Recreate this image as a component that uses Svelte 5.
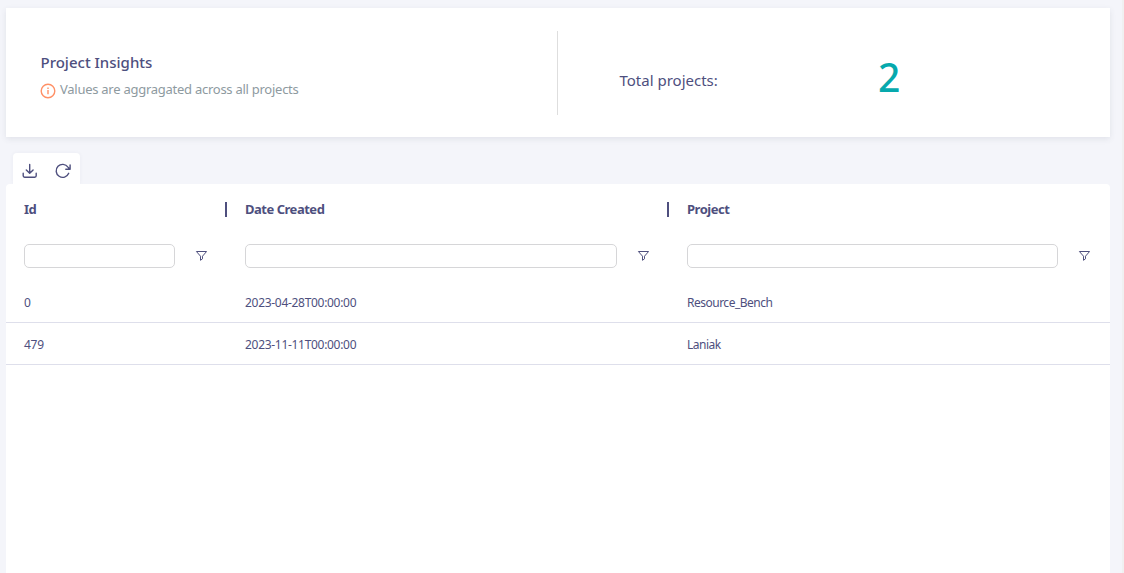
<script>
  const columns = [
    { key: 'id', label: 'Id' },
    { key: 'created', label: 'Date Created' },
    { key: 'project', label: 'Project' }
  ];
  const rows = [
    { id: '0', created: '2023-04-28T00:00:00', project: 'Resource_Bench' },
    { id: '479', created: '2023-11-11T00:00:00', project: 'Laniak' }
  ];
  let filters = $state({ id: '', created: '', project: '' });
</script>

<main>
  <section class="summary">
    <div class="intro">
      <h1>Project Insights</h1>
      <p>
        <svg width="16" height="16" viewBox="0 0 16 16" fill="none" stroke="#ff9066" stroke-width="1.4">
          <circle cx="8" cy="8" r="6.8" />
          <path d="M8 7v4.200M8 4.400v1.500" />
        </svg>
        <span>Values are aggragated across all projects</span>
      </p>
    </div>
    <div class="total">
      <span class="label">Total projects:</span>
      <strong>2</strong>
    </div>
  </section>

  <div class="tools">
    <button aria-label="Download">
      <svg width="16" height="16" viewBox="0 0 16 16" fill="none" stroke="#4e4f7e" stroke-width="1.400" stroke-linecap="round" stroke-linejoin="round">
        <path d="M7.700 1.500v8.600M4.300 7l3.400 3.300L11.100 7M1.200 10.200v2.600a1.400 1.400 0 0 0 1.400 1.400h10.200a1.400 1.400 0 0 0 1.400-1.400v-2.600" />
      </svg>
    </button>
    <button aria-label="Refresh">
      <svg width="16" height="16" viewBox="0 0 16 16" fill="none" stroke="#4e4f7e" stroke-width="1.400" stroke-linecap="round" stroke-linejoin="round">
        <path d="M13.700 10.300A6.500 6.500 0 1 1 13 4.100L14.500 6M15.100 2v4.300h-4.300" />
      </svg>
    </button>
  </div>

  <section class="grid">
    <div class="row head">
      {#each columns as column}
        <div class="cell">{column.label}</div>
      {/each}
    </div>
    <div class="row filters">
      {#each columns as column}
        <div class="cell">
          <input aria-label={column.label} bind:value={filters[column.key]} />
          <svg width="12" height="12" viewBox="0 0 12 12" fill="none" stroke="#4e4f7e" stroke-width="1">
            <path d="M1.400 1.500h10.200L7.500 6.200v2.600L5.500 10.300V6.200z" />
          </svg>
        </div>
      {/each}
    </div>
    {#each rows as row}
      <div class="row data">
        {#each columns as column}
          <div class="cell {column.key}">{row[column.key]}</div>
        {/each}
      </div>
    {/each}
  </section>
</main>

<style>
  :global(body) {
    background: #f4f5fa;
    overflow: hidden;
  }
  main {
    box-sizing: border-box;
    height: 573px;
    padding: 8px 12px 0 6px;
    border-right: 2px solid #f0f0f1;
    display: flex;
    flex-direction: column;
    font-family: "Noto Sans", "Open Sans", sans-serif;
    color: #4e4f7e;
  }
  .summary {
    box-sizing: border-box;
    height: 129px;
    flex: none;
    padding: 23px 0 22px;
    display: grid;
    grid-template-columns: 551px 1fr;
    background: #fff;
    box-shadow: 0 2px 6px rgba(60, 65, 90, 0.1);
  }
  .intro {
    padding: 20px 0 0 34px;
  }
  h1 {
    margin: 0;
    padding-left: 0.5px;
    font-size: 15px;
    line-height: 22px;
    font-weight: 500;
    letter-spacing: 0;
  }
  p {
    margin: 7px 0 0;
    display: flex;
    gap: 4px;
    font-size: 13px;
    line-height: 18px;
    color: #8e9a9f;
    letter-spacing: -0.26px;
  }
  p svg {
    margin-top: 3px;
  }
  .total {
    border-left: 1px solid #dedede;
    display: flex;
    padding-left: 61.5px;
  }
  .label {
    width: 258.5px;
    padding-top: 38px;
    font-size: 15px;
    line-height: 22px;
    letter-spacing: 0;
  }
  strong {
    padding-top: 22px;
    font-size: 39px;
    line-height: 48px;
    font-weight: 500;
    color: #06a9ad;
  }
  .tools {
    margin: 16px 0 0 7px;
    width: 67px;
    height: 31px;
    flex: none;
    box-sizing: border-box;
    display: flex;
    gap: 17px;
    padding: 10px 0 0 9px;
    border-radius: 4px 4px 0 0;
    background: #fff;
    box-shadow: 0 0 4px rgba(60, 65, 90, 0.05);
  }
  button {
    padding: 0;
    border: 0;
    width: 16px;
    height: 16px;
    background: none;
  }
  svg {
    display: block;
    flex: none;
  }
  .grid {
    flex: 1;
    background: #fff;
    border-radius: 4px 4px 0 0;
    position: relative;
  }
  .row {
    display: grid;
    grid-template-columns: 221px 442px 441px;
  }
  .cell {
    box-sizing: border-box;
    padding-left: 18px;
    display: flex;
    align-items: center;
  }
  .head {
    height: 50px;
    font-size: 13px;
    font-weight: 700;
    letter-spacing: -0.48px;
  }
  .head .cell:not(:last-child)::after {
    content: "";
    width: 2px;
    height: 15px;
    margin-left: auto;
    background: #4e4f7e;
  }
  .filters {
    height: 43px;
    margin-bottom: 4px;
  }
  .filters .cell {
    padding-right: 20px;
    gap: 20px;
  }
  input {
    box-sizing: border-box;
    flex: 1;
    min-width: 0;
    height: 24px;
    padding: 0 6px;
    border: 1px solid #d6d6d8;
    border-radius: 5px;
    background: #fff;
    font: inherit;
    color: inherit;
    outline: none;
  }
  .data {
    box-sizing: border-box;
    height: 42px;
    border-bottom: 1px solid #dedfeb;
    font-size: 12px;
    letter-spacing: -0.3px;
  }
  .data .cell {
    padding-top: 2px;
  }
  .data .project {
    letter-spacing: -0.5px;
  }
</style>
